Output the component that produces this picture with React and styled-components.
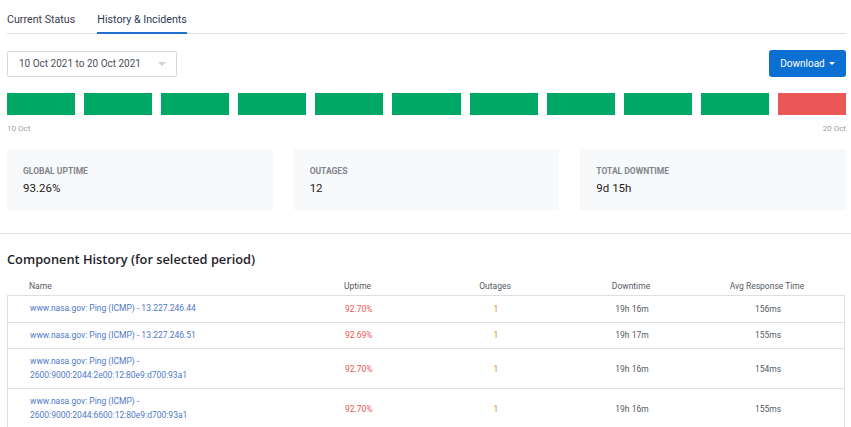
import React from 'react'
import styled, { createGlobalStyle } from 'styled-components'

const GlobalStyle = createGlobalStyle`
  body {
    margin: 0;
    background: #fff;
    font-family: Roboto, "Liberation Sans", sans-serif;
    color: #333;
  }
`

const bars = ['up', 'up', 'up', 'up', 'up', 'up', 'up', 'up', 'up', 'up', 'down']

const stats = [
  { label: 'Global Uptime', value: '93.26%' },
  { label: 'Outages', value: '12' },
  { label: 'Total Downtime', value: '9d 15h' },
]

const rows = [
  { name: 'www.nasa.gov: Ping (ICMP) - 13.227.246.44', uptime: '92.70%', outages: '1', downtime: '19h 16m', avg: '156ms' },
  { name: 'www.nasa.gov: Ping (ICMP) - 13.227.246.51', uptime: '92.69%', outages: '1', downtime: '19h 17m', avg: '155ms' },
  { name: ['www.nasa.gov: Ping (ICMP) -', '2600:9000:2044:2e00:12:80e9:d700:93a1'], uptime: '92.70%', outages: '1', downtime: '19h 16m', avg: '154ms' },
  { name: ['www.nasa.gov: Ping (ICMP) -', '2600:9000:2044:6600:12:80e9:d700:93a1'], uptime: '92.70%', outages: '1', downtime: '19h 16m', avg: '155ms' },
]

const App = () => {
  return (
    <Page>
      <GlobalStyle />
      <Top>
        <Tabs>
          <Tab>Current Status</Tab>
          <Tab $active>History &amp; Incidents</Tab>
        </Tabs>

        <Toolbar>
          <DateSelect>
            <span>10 Oct 2021 to 20 Oct 2021</span>
            <Caret color="#cfd2d6" w={8} />
          </DateSelect>
          <DownloadButton>
            Download <Caret color="#fff" w={6} />
          </DownloadButton>
        </Toolbar>

        <Bars>
          {bars.map((b, i) => <Bar key={i} $status={b} />)}
        </Bars>
        <BarLabels>
          <span>10 Oct</span>
          <span>20 Oct</span>
        </BarLabels>

        <Stats>
          {stats.map(s => (
            <StatCard key={s.label}>
              <StatLabel>{s.label}</StatLabel>
              <StatValue>{s.value}</StatValue>
            </StatCard>
          ))}
        </Stats>
      </Top>

      <Divider />

      <Bottom>
        <Heading>Component History (for selected period)</Heading>
        <Table>
          <HeadRow>
            <HeadCell>Name</HeadCell>
            <HeadCell>Uptime</HeadCell>
            <HeadCell $center>Outages</HeadCell>
            <HeadCell $center>Downtime</HeadCell>
            <HeadCell $center>Avg Response Time</HeadCell>
          </HeadRow>
          {rows.map((r, i) => (
            <Row key={i}>
              <NameCell>
                {Array.isArray(r.name) ? r.name.map(l => <div key={l}>{l}</div>) : r.name}
              </NameCell>
              <Cell $color="#ea5455">{r.uptime}</Cell>
              <Cell $center $color="#d98c1a">{r.outages}</Cell>
              <Cell $center>{r.downtime}</Cell>
              <Cell $center>{r.avg}</Cell>
            </Row>
          ))}
        </Table>
      </Bottom>
    </Page>
  )
}

const Caret = ({ color, w }) => (
  <svg width={w} height={w / 2} viewBox="0 0 8 4">
    <path d="M0 0 L8 0 L4 4 Z" fill={color} />
  </svg>
)

const Page = styled.div`
  width: 851px;
  height: 427px;
  overflow: hidden;
`

const Top = styled.div`
  padding: 0 5px 0 7px;
`

const Tabs = styled.div`
  display: flex;
  gap: 22px;
  height: 34px;
  padding-top: 10px;
  box-sizing: border-box;
  border-bottom: 1px solid #dcdfe3;
`

const Tab = styled.div`
  font-size: 10.7px;
  color: ${p => (p.$active ? '#2b3a55' : '#3a3a4a')};
  padding-top: 3px;
  border-bottom: 2px solid ${p => (p.$active ? '#1e6fd0' : 'transparent')};
  margin-bottom: -1px;
  box-sizing: border-box;
`

const Toolbar = styled.div`
  display: flex;
  justify-content: space-between;
  align-items: center;
  margin-top: 16px;
`

const DateSelect = styled.div`
  width: 170px;
  height: 26px;
  box-sizing: border-box;
  border: 1px solid #d4d7dc;
  border-radius: 2px;
  display: flex;
  align-items: center;
  justify-content: space-between;
  padding: 0 10px 0 11px;
  font-size: 10px;
  color: #4a4f5a;
`

const DownloadButton = styled.button`
  width: 77px;
  height: 27px;
  background: #0b6fd4;
  border: none;
  border-radius: 3px;
  color: #fff;
  font-family: inherit;
  font-size: 10px;
  display: flex;
  align-items: center;
  justify-content: center;
  gap: 4px;
  padding: 0;
`

const Bars = styled.div`
  display: grid;
  grid-template-columns: repeat(11, 1fr);
  column-gap: 9px;
  margin-top: 16px;
`

const Bar = styled.div`
  height: 22px;
  background: ${p => (p.$status === 'down' ? '#ea5757' : '#00a866')};
`

const BarLabels = styled.div`
  display: flex;
  justify-content: space-between;
  font-size: 8px;
  color: #9a9ea6;
  margin-top: 9px;
`

const Stats = styled.div`
  display: grid;
  grid-template-columns: repeat(3, 1fr);
  column-gap: 21px;
  margin-top: 16px;
`

const StatCard = styled.div`
  height: 61px;
  background: #f8f9fa;
  padding: 17px 16px 0;
  box-sizing: border-box;
`

const StatLabel = styled.div`
  font-size: 8.5px;
  font-weight: 700;
  text-transform: uppercase;
  color: #80858e;
`

const StatValue = styled.div`
  font-size: 11.5px;
  color: #222;
  margin-top: 5px;
`

const Divider = styled.div`
  height: 1px;
  background: #dcdfe3;
  margin-top: 23px;
`

const Bottom = styled.div`
  padding: 0 6px 0 7px;
`

const Heading = styled.h2`
  margin: 16px 0 0;
  font-family: "Open Sans", sans-serif;
  font-size: 12.8px;
  font-weight: 600;
  color: #1f2329;
`

const cols = '315px 105px 136px 136px 136px 1fr'

const HeadRow = styled.div`
  display: grid;
  grid-template-columns: ${cols};
  height: 19px;
  align-items: center;
  border-bottom: 1px solid #dcdfe3;
  margin-top: 8px;
`

const HeadCell = styled.div`
  font-size: 8.5px;
  color: #555a63;
  padding-left: ${p => (p.$center ? '0' : '22px')};
  text-align: ${p => (p.$center ? 'center' : 'left')};
`

const Table = styled.div``

const Row = styled.div`
  display: grid;
  grid-template-columns: ${cols};
  min-height: 26px;
  padding: 6px 0;
  box-sizing: border-box;
  align-items: center;
  border: 1px solid #dcdfe3;
  border-top: none;
`

const NameCell = styled.div`
  font-size: 8.5px;
  line-height: 13.5px;
  color: #4f79c8;
  padding-left: 22px;
`

const Cell = styled.div`
  font-size: 8.5px;
  color: ${p => p.$color || '#555a63'};
  padding-left: ${p => (p.$center ? '0' : '22px')};
  text-align: ${p => (p.$center ? 'center' : 'left')};
`

export default App
